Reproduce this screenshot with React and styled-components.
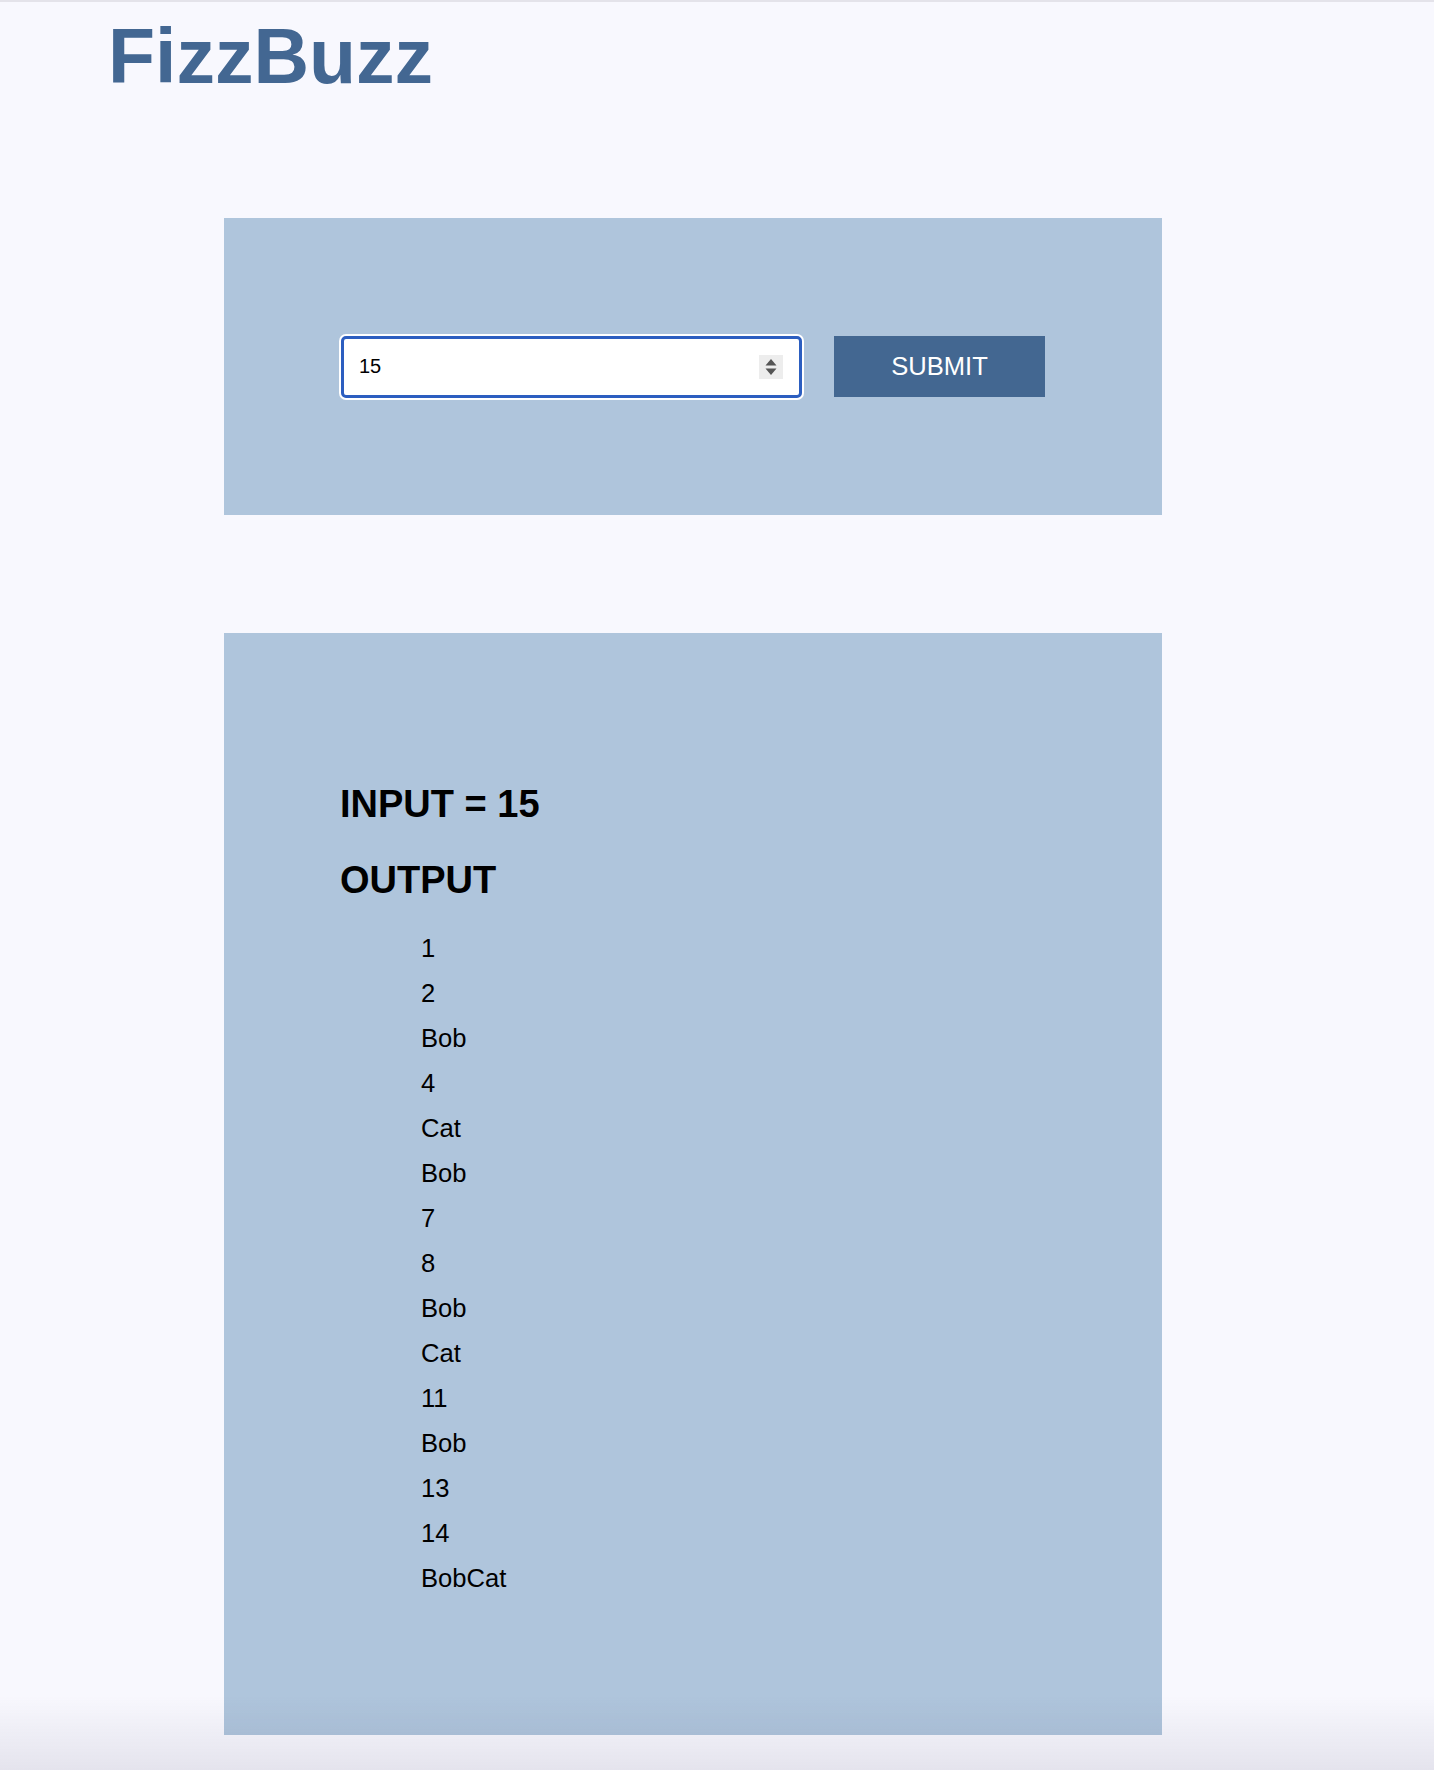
import React, { Component } from "react";
import styled, { createGlobalStyle } from "styled-components";

const GlobalStyle = createGlobalStyle`
  html, body {
    margin: 0;
    padding: 0;
  }
  body {
    background: #f8f8fe;
    border-top: 2px solid #e4e3ea;
    font-family: "Liberation Sans", Arial, sans-serif;
    min-height: 1768px;
  }
`;

const Header = styled.header`
  padding: 10px 0 0 108px;
  height: 216px;
  box-sizing: border-box;
`;

const Title = styled.h1`
  margin: 0;
  font-size: 77px;
  line-height: 88px;
  font-weight: 700;
  color: #436792;
`;

const Main = styled.main`
  width: 938px;
  margin-left: 224px;
  display: flex;
  flex-direction: column;
  gap: 118px;
`;

const Panel = styled.section`
  background: #afc5dc;
  box-sizing: border-box;
`;

const FormPanel = styled(Panel)`
  height: 297px;
  display: flex;
  align-items: center;
  justify-content: center;
`;

const Form = styled.form`
  display: flex;
  align-items: center;
  gap: 32px;
`;

const InputWrap = styled.div`
  position: relative;
  width: 461px;
  height: 62px;
`;

const NumberInput = styled.input`
  width: 100%;
  height: 100%;
  box-sizing: border-box;
  border: 3px solid #2c5ec0;
  border-radius: 5px;
  box-shadow: 0 0 0 2px #ffffff;
  outline: none;
  padding: 0 15px;
  background: #fff;
  font-family: "Liberation Sans", Arial, sans-serif;
  font-size: 20px;
  color: #000;
`;

const Spinner = styled.span`
  position: absolute;
  right: 19px;
  top: 19px;
  width: 24px;
  height: 24px;
  background: #ededed;
  display: flex;
  align-items: center;
  justify-content: center;
`;

const SubmitButton = styled.button`
  width: 211px;
  height: 61px;
  border: none;
  background: #436791;
  color: #fff;
  font-family: "Liberation Sans", Arial, sans-serif;
  font-size: 25.6px;
  cursor: pointer;
`;

const OutputPanel = styled(Panel)`
  padding: 149px 0 134px 116px;
`;

const Heading = styled.h2`
  margin: 0;
  font-size: 38px;
  line-height: 44px;
  font-weight: 700;
  color: #000;
  & + & {
    margin-top: 32px;
  }
`;

const List = styled.ul`
  list-style: none;
  margin: 24px 0 0;
  padding: 0 0 0 81px;
`;

const Item = styled.li`
  font-size: 25.6px;
  line-height: 45px;
  color: #000;
`;

const BottomShade = styled.div`
  position: fixed;
  left: 0;
  right: 0;
  bottom: 0;
  height: 75px;
  pointer-events: none;
  background: linear-gradient(to bottom, rgba(40, 30, 70, 0), rgba(40, 30, 70, 0.09));
`;

const fizzBuzz = n => {
  const out = [];
  for (let i = 1; i <= n; i++) {
    let s = "";
    if (i % 3 === 0) s += "Bob";
    if (i % 5 === 0) s += "Cat";
    out.push(s || String(i));
  }
  return out;
};

class App extends Component {
  constructor(props) {
    super(props);
    this.state = { value: "15", submitted: 15 };
  }
  handleSubmit(e) {
    e.preventDefault();
    this.setState({ submitted: parseInt(this.state.value, 10) || 0 });
  }
  render() {
    const { value, submitted } = this.state;
    return (
      <>
        <GlobalStyle />
        <Header>
          <Title>FizzBuzz</Title>
        </Header>
        <Main>
          <FormPanel>
            <Form onSubmit={e => this.handleSubmit(e)}>
              <InputWrap>
                <NumberInput
                  type="text"
                  inputMode="numeric"
                  value={value}
                  onChange={e => this.setState({ value: e.target.value })}
                />
                <Spinner>
                  <svg width="12" height="18" viewBox="0 0 12 18">
                    <path d="M6 1 L11.5 7.5 L0.5 7.5 Z" fill="#555" />
                    <path d="M0.5 10.5 L11.5 10.5 L6 17 Z" fill="#555" />
                  </svg>
                </Spinner>
              </InputWrap>
              <SubmitButton type="submit">SUBMIT</SubmitButton>
            </Form>
          </FormPanel>
          <OutputPanel>
            <Heading>INPUT = {submitted}</Heading>
            <Heading>OUTPUT</Heading>
            <List>
              {fizzBuzz(submitted).map((s, i) => (
                <Item key={i}>{s}</Item>
              ))}
            </List>
          </OutputPanel>
        </Main>
        <BottomShade />
      </>
    );
  }
}

export default App;
